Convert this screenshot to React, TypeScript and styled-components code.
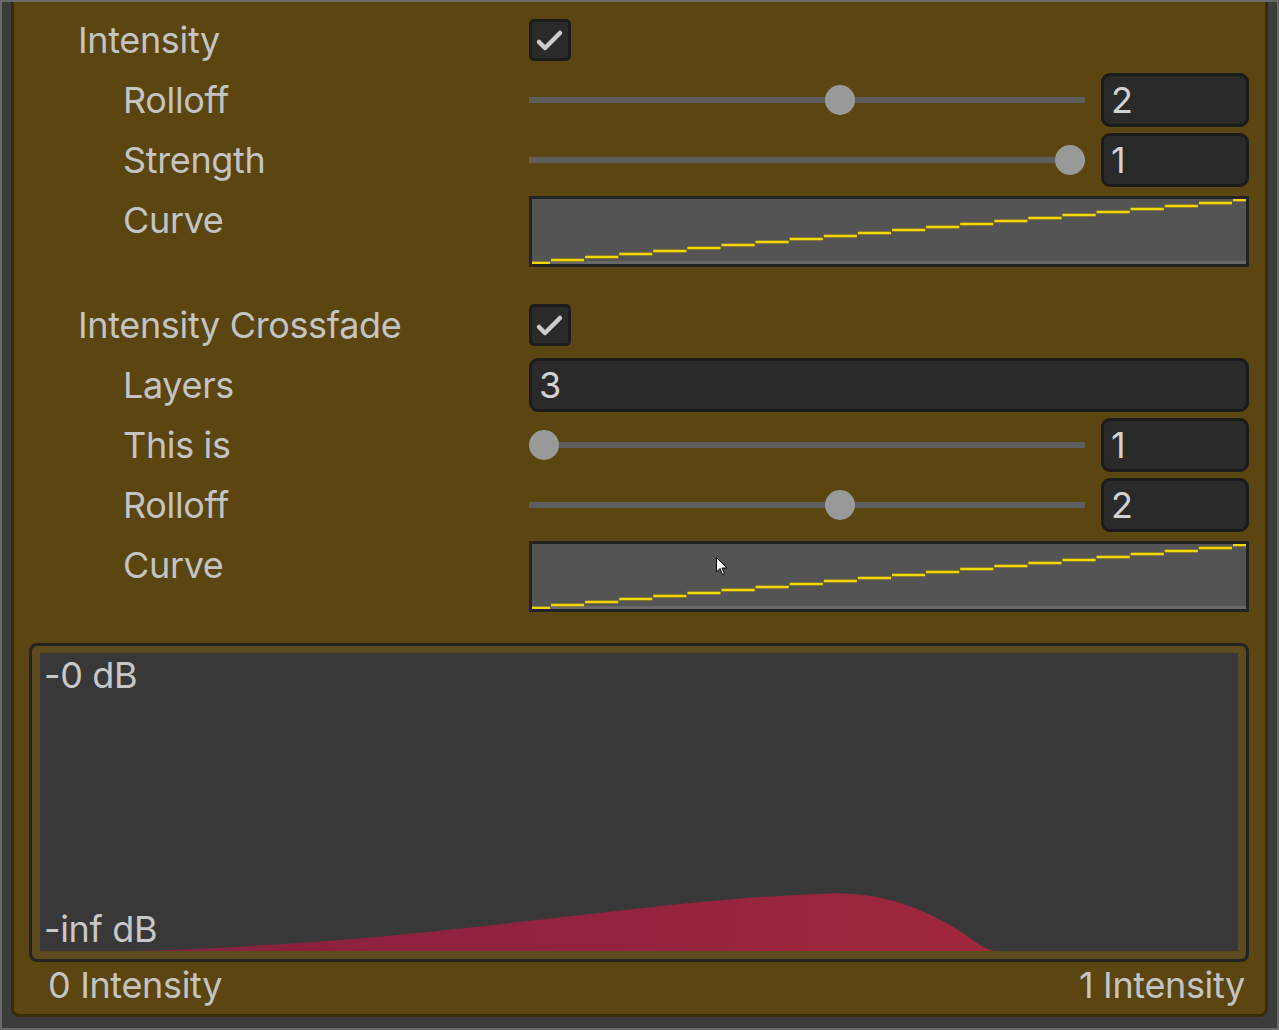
import React from "react";
import styled, { createGlobalStyle } from "styled-components";

const Global = createGlobalStyle`
  html, body { margin: 0; padding: 0; background: #3c3c3c; }
  * { box-sizing: border-box; }
`;

const Frame = styled.div`
  width: 1279px;
  height: 1030px;
  border: 2px solid #6a6a6a;
  background: #3c3c3c;
  padding: 0 9px 11px 9px;
  display: flex;
  font-family: "Inter", "Noto Sans", sans-serif;
  letter-spacing: -0.35px;
`;

const Panel = styled.div`
  flex: 1;
  background: #5b4511;
  border: 3px solid #3a2b08;
  border-top: none;
  border-radius: 0 0 8px 8px;
  padding: 11px 16px 0 15px;
  display: flex;
  flex-direction: column;
`;

const Group = styled.div<{ $top?: number }>`
  display: flex;
  flex-direction: column;
  gap: 6px;
  margin-top: ${(p) => p.$top ?? 0}px;
`;

const Row = styled.div<{ $tall?: boolean }>`
  display: grid;
  grid-template-columns: 500px 1fr;
  align-items: ${(p) => (p.$tall ? "start" : "center")};
  min-height: 54px;
  padding: ${(p) => (p.$tall ? "0 0 3px 0" : "0")};
`;

const Label = styled.div<{ $indent: number }>`
  padding-left: ${(p) => p.$indent}px;
  font-size: 36px;
  line-height: 54px;
  color: #c4c4c4;
  white-space: nowrap;
`;

const CheckBox = styled.div`
  width: 42px;
  height: 42px;
  background: #2a2a2a;
  border: 3px solid #1c1c1c;
  border-radius: 5px;
  display: flex;
  align-items: center;
  justify-content: center;
`;

const SliderWrap = styled.div`
  display: flex;
  align-items: center;
  gap: 16px;
`;

const Track = styled.div`
  flex: 1;
  height: 54px;
  position: relative;
  display: flex;
  align-items: center;
`;

const TrackLine = styled.div`
  width: 100%;
  height: 6px;
  background: #5e5e5e;
`;

const Thumb = styled.div`
  position: absolute;
  top: 12px;
  width: 30px;
  height: 30px;
  border-radius: 50%;
  background: #999999;
`;

const NumberField = styled.div<{ $full?: boolean }>`
  width: ${(p) => (p.$full ? "100%" : "148px")};
  height: 54px;
  background: #2a2a2a;
  border: 3px solid #1b1b1b;
  border-radius: 9px;
  padding-left: 7px;
  font-size: 36px;
  line-height: 48px;
  color: #d2d2d2;
`;

const CurveBox = styled.div`
  margin-top: 3px;
  height: 71px;
  border: 3px solid #232323;
  background: #545454;
  position: relative;
  display: flex;
  flex-direction: column;
  justify-content: flex-end;
`;

const CurveBase = styled.div`
  height: 3px;
  background: #686868;
`;

const CurveSvg = styled.svg`
  position: absolute;
  inset: 0;
  width: 100%;
  height: 100%;
`;

const Cursor = styled.svg`
  position: absolute;
  width: 12px;
  height: 19px;
`;

const GraphBox = styled.div`
  margin-top: 28px;
  border: 3px solid #232323;
  border-radius: 8px;
  background: #5e4a1f;
  padding: 7px 8px 8px 8px;
`;

const GraphArea = styled.div`
  height: 298px;
  background: #383838;
  position: relative;
  display: flex;
  flex-direction: column;
  justify-content: space-between;
  padding-left: 4px;
`;

const GraphSvg = styled.svg`
  position: absolute;
  inset: 0;
  width: 100%;
  height: 100%;
`;

const GraphLabel = styled.div`
  position: relative;
  font-size: 36px;
  line-height: 44px;
  color: #c8c8c8;
`;

const AxisRow = styled.div`
  display: flex;
  justify-content: space-between;
  padding: 0 4px 0 19px;
  font-size: 36px;
  line-height: 47px;
  color: #c4c4c4;
`;

const Check = () => (
  <svg width="36" height="36" viewBox="0 0 36 36">
    <polyline
      points="7,20 13,26 28,11"
      fill="none"
      stroke="#cdcdcd"
      strokeWidth="4.5"
      strokeLinecap="round"
      strokeLinejoin="round"
    />
  </svg>
);

const Slider = ({ frac, value }: { frac: number; value: string }) => (
  <SliderWrap>
    <Track>
      <TrackLine />
      <Thumb style={{ left: `calc(${frac} * (100% - 30px))` }} />
    </Track>
    <NumberField>{value}</NumberField>
  </SliderWrap>
);

const steps = Array.from({ length: 22 }, (_, k) => {
  const x1 = k === 0 ? 0 : 18 + 34.1 * (k - 1) + 1;
  const x2 = k === 21 ? 714 : 18 + 34.1 * k;
  const y = 64 - 3 * k;
  return { x1, x2, y };
});

const Curve = ({ cursor }: { cursor?: boolean }) => (
  <CurveBox>
    <CurveBase />
    <CurveSvg viewBox="0 0 714 65" preserveAspectRatio="none">
      {steps.map((s, i) => (
        <g key={i}>
          <line x1={s.x1} x2={s.x2} y1={s.y} y2={s.y} stroke="#b9a000" strokeOpacity="0.5" strokeWidth="4" />
          <line x1={s.x1} x2={s.x2} y1={s.y} y2={s.y} stroke="#f2d600" strokeWidth="2" />
        </g>
      ))}
    </CurveSvg>
    {cursor && (
      <Cursor viewBox="0 0 12 19" style={{ left: 184, top: 13 }}>
        <path d="M0.5 0.5 L0.5 15 L4 11.5 L6.5 17.5 L8.5 16.7 L6 11 L11 11 Z" fill="#fff" stroke="#000" strokeWidth="1" />
      </Cursor>
    )}
  </CurveBox>
);

export default function App() {
  return (
    <>
      <Global />
      <Frame>
        <Panel>
          <Group>
            <Row>
              <Label $indent={49}>Intensity</Label>
              <CheckBox>
                <Check />
              </CheckBox>
            </Row>
            <Row>
              <Label $indent={94}>Rolloff</Label>
              <Slider frac={0.5627} value="2" />
            </Row>
            <Row>
              <Label $indent={94}>Strength</Label>
              <Slider frac={1} value="1" />
            </Row>
            <Row $tall>
              <Label $indent={94}>Curve</Label>
              <Curve />
            </Row>
          </Group>
          <Group $top={28}>
            <Row>
              <Label $indent={49}>Intensity Crossfade</Label>
              <CheckBox>
                <Check />
              </CheckBox>
            </Row>
            <Row>
              <Label $indent={94}>Layers</Label>
              <NumberField $full>3</NumberField>
            </Row>
            <Row>
              <Label $indent={94}>This is</Label>
              <Slider frac={0} value="1" />
            </Row>
            <Row>
              <Label $indent={94}>Rolloff</Label>
              <Slider frac={0.5627} value="2" />
            </Row>
            <Row $tall>
              <Label $indent={94}>Curve</Label>
              <Curve cursor />
            </Row>
          </Group>
          <GraphBox>
            <GraphArea>
              <GraphSvg viewBox="0 0 1198 300" preserveAspectRatio="none">
                <defs>
                  <linearGradient id="hill" x1="0" x2="1" y1="0" y2="0">
                    <stop offset="0" stopColor="#872140" />
                    <stop offset="0.6" stopColor="#95233f" />
                    <stop offset="1" stopColor="#a0283b" />
                  </linearGradient>
                </defs>
                <path
                  d="M 90 300 C 400 292, 600 248, 790 242 C 840 241, 880 255, 920 280 C 935 290, 945 300, 958 300 Z"
                  fill="url(#hill)"
                />
              </GraphSvg>
              <GraphLabel>-0 dB</GraphLabel>
              <GraphLabel>-inf dB</GraphLabel>
            </GraphArea>
          </GraphBox>
          <AxisRow>
            <span>0 Intensity</span>
            <span>1 Intensity</span>
          </AxisRow>
        </Panel>
      </Frame>
    </>
  );
}
